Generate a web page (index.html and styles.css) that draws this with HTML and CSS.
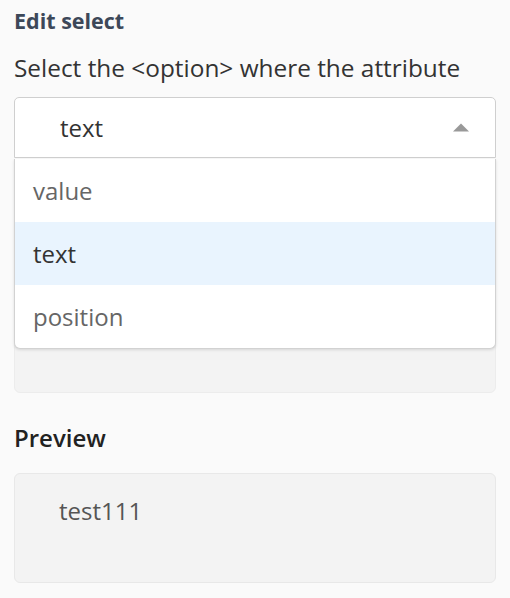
FILE: index.html
```html
<!DOCTYPE html>
<html>
<head>
<meta charset="utf-8">
<link rel="stylesheet" href="styles.css">
</head>
<body>
<div class="panel">
  <h3 class="title">Edit select</h3>
  <p class="label">Select the &lt;option&gt; where the attribute</p>
  <div class="select-wrap">
    <div class="select">
      <span class="select-value">text</span>
      <svg class="arrow" width="16" height="9" viewBox="0 0 16 9"><path d="M0 8.5 L8 0.5 L16 8.5 Z" fill="#999"/></svg>
    </div>
    <ul class="menu">
      <li class="option">value</li>
      <li class="option selected">text</li>
      <li class="option">position</li>
    </ul>
  </div>
  <div class="field"></div>
  <h3 class="title preview-title">Preview</h3>
  <div class="preview">test111</div>
</div>
</body>
</html>
```
FILE: styles.css
```css
html, body {
  margin: 0;
  padding: 0;
  background: #fafafa;
}
body {
  font-family: "Open Sans", "Noto Sans", sans-serif;
}
.panel {
  padding: 6px 14px 0 14px;
  display: flex;
  flex-direction: column;
}
.title {
  margin: 0;
  font-size: 21.5px;
  font-weight: 700;
  line-height: 30px;
  color: #3d4859;
}
.label {
  margin: 16px 0 0 0;
  font-size: 24.4px;
  line-height: 32px;
  color: #333;
}
.select-wrap {
  position: relative;
  margin-top: 13px;
}
.select {
  height: 61px;
  box-sizing: border-box;
  border: 1px solid #cfcfcf;
  border-radius: 5px 5px 0 0;
  background: #fff;
  display: flex;
  align-items: center;
  justify-content: space-between;
  padding: 0 26px 0 45px;
}
.select-value {
  font-size: 24px;
  color: #333;
}
.arrow {
  display: block;
}
.menu {
  position: absolute;
  left: 0;
  right: 0;
  top: 62px;
  margin: 0;
  padding: 0;
  list-style: none;
  background: #fff;
  border: 1px solid #d2d2d2;
  border-top: none;
  border-radius: 0 0 6px 6px;
  box-shadow: 0 1px 3px rgba(0,0,0,0.12);
  z-index: 2;
}
.option {
  height: 63px;
  display: flex;
  align-items: center;
  padding-left: 18px;
  font-size: 24px;
  color: #666;
}
.option.selected {
  background: #e9f4fe;
  color: #333;
}
.field {
  margin-top: 14px;
  height: 221px;
  box-sizing: border-box;
  background: #f3f3f3;
  border: 1px solid #ececec;
  border-radius: 6px;
}
.preview-title {
  margin-top: 29px;
  font-size: 24px;
  font-weight: 600;
  line-height: 32px;
  color: #222;
}
.preview {
  margin-top: 19px;
  height: 110px;
  box-sizing: border-box;
  background: #f3f3f3;
  border: 1px solid #e8e8e8;
  border-radius: 6px;
  padding: 21px 0 0 44px;
  font-size: 24px;
  color: #555;
  line-height: 32px;
}
```
